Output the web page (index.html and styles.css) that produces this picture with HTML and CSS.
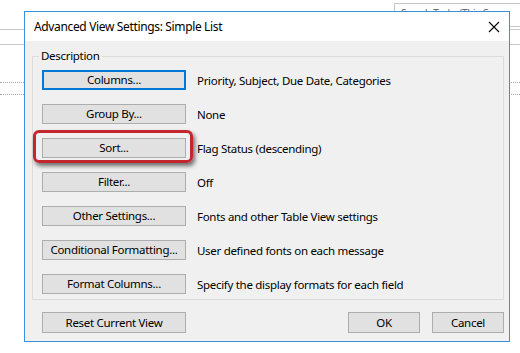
FILE: index.html
```html
<!DOCTYPE html>
<html lang="en">
<head>
    <meta charset="UTF-8">
    <meta name="viewport" content="width=device-width, initial-scale=1.0">
    <title>Advanced View Settings</title>
    <link rel="stylesheet" href="styles.css">
</head>
<body>

    <!-- Outlook window behind the dialog -->
    <div class="backdrop">
        <div class="search-box">Search Tasks (This Comp</div>
        <div class="bg-line line-1"></div>
        <div class="bg-line line-2"></div>
        <div class="bg-line dotted line-3"></div>
        <div class="bg-line dotted line-4"></div>
    </div>

    <!-- Dialog -->
    <div class="dialog">
        <div class="title-bar">
            <span class="title">Advanced View Settings: Simple List</span>
            <svg class="close" width="12" height="12" viewBox="0 0 12 12">
                <path d="M1 1 L11 11 M11 1 L1 11" stroke="#000" stroke-width="1.1" fill="none"/>
            </svg>
        </div>

        <div class="dialog-body">
            <fieldset class="group">
                <legend>Description</legend>
                <div class="rows">
                    <button class="btn default">Columns...</button>
                    <span class="desc">Priority, Subject, Due Date, Categories</span>

                    <button class="btn">Group By...</button>
                    <span class="desc">None</span>

                    <span class="marked">
                        <button class="btn">Sort...</button>
                        <span class="highlight"></span>
                    </span>
                    <span class="desc">Flag Status (descending)</span>

                    <button class="btn">Filter...</button>
                    <span class="desc">Off</span>

                    <button class="btn">Other Settings...</button>
                    <span class="desc">Fonts and other Table View settings</span>

                    <button class="btn">Conditional Formatting...</button>
                    <span class="desc">User defined fonts on each message</span>

                    <button class="btn">Format Columns...</button>
                    <span class="desc">Specify the display formats for each field</span>
                </div>
            </fieldset>

            <div class="footer">
                <button class="btn">Reset Current View</button>
                <div class="actions">
                    <button class="btn small">OK</button>
                    <button class="btn small">Cancel</button>
                </div>
            </div>
        </div>
    </div>

</body>
</html>
```

FILE: styles.css
```css
/* Global */
body {
    margin: 0;
    width: 520px;
    height: 353px;
    overflow: hidden;
    position: relative;
    background: #ffffff;
    font-family: "Noto Sans", "Open Sans", sans-serif;
    font-size: 11.5px;
    letter-spacing: -0.3px;
    color: #000;
    padding: 11px 10px 0 24px;
    box-sizing: border-box;
}

/* Backdrop window */
.backdrop {
    position: absolute;
    top: 0;
    left: 0;
    width: 100%;
    height: 100%;
}

.search-box {
    position: absolute;
    top: 3px;
    left: 394px;
    width: 140px;
    height: 22px;
    border: 1px solid #c6c6c6;
    color: #6d6d6d;
    font-size: 10px;
    line-height: 18px;
    padding-left: 6px;
    white-space: nowrap;
}

.bg-line {
    position: absolute;
    left: 0;
    width: 100%;
    height: 1px;
    background: #c8c8c8;
}

.bg-line.dotted {
    background: none;
    border-top: 1px dotted #a8a8a8;
}

.line-1 { top: 29px; }
.line-2 { top: 44px; }
.line-3 { top: 82px; }
.line-4 { top: 94px; }

/* Dialog */
.dialog {
    position: relative;
    width: 486px;
    height: 331px;
    box-sizing: border-box;
    border: 1px solid #3c8fdc;
    background: #f0f0f0;
    display: flex;
    flex-direction: column;
}

.title-bar {
    height: 29px;
    background: #ffffff;
    display: flex;
    align-items: center;
    justify-content: space-between;
    padding: 0 8px 0 9px;
}

.title {
    font-size: 12px;
    letter-spacing: -0.35px;
}

.close {
    margin-right: 1px;
}

.dialog-body {
    padding: 7px 5px 0 7px;
}

/* Group box */
.group {
    margin: 0;
    border: 1px solid #dcdcdc;
    padding: 6px 0 5px 9px;
}

.group legend {
    margin-left: -3px;
    padding: 0 2px;
    line-height: 16px;
}

.rows {
    display: grid;
    grid-template-columns: 144px auto;
    column-gap: 11px;
    row-gap: 14px;
    align-items: center;
}

/* Buttons */
.btn {
    font-family: inherit;
    font-size: 11.5px;
    letter-spacing: -0.3px;
    color: #000;
    width: 144px;
    height: 20px;
    padding: 0;
    background: #e1e1e1;
    border: 1px solid #adadad;
    line-height: 16px;
}

.btn.default {
    border: 2px solid #0078d7;
}

.btn.small {
    width: 72px;
    height: 21px;
}

.desc {
    white-space: nowrap;
}

/* Red highlight around Sort */
.marked {
    position: relative;
    display: block;
    height: 20px;
}

.marked .btn {
    display: block;
}

.highlight {
    position: absolute;
    top: -8px;
    left: -9px;
    right: -7px;
    bottom: -5px;
    border: 3px solid #c4262e;
    border-radius: 6px;
    box-shadow: 2px 3px 4px rgba(0, 0, 0, 0.55);
}

/* Footer */
.footer {
    display: flex;
    justify-content: space-between;
    padding: 12px 0 0 10px;
}

.footer .btn {
    height: 21px;
}

.actions {
    display: flex;
    gap: 12px;
}
```
